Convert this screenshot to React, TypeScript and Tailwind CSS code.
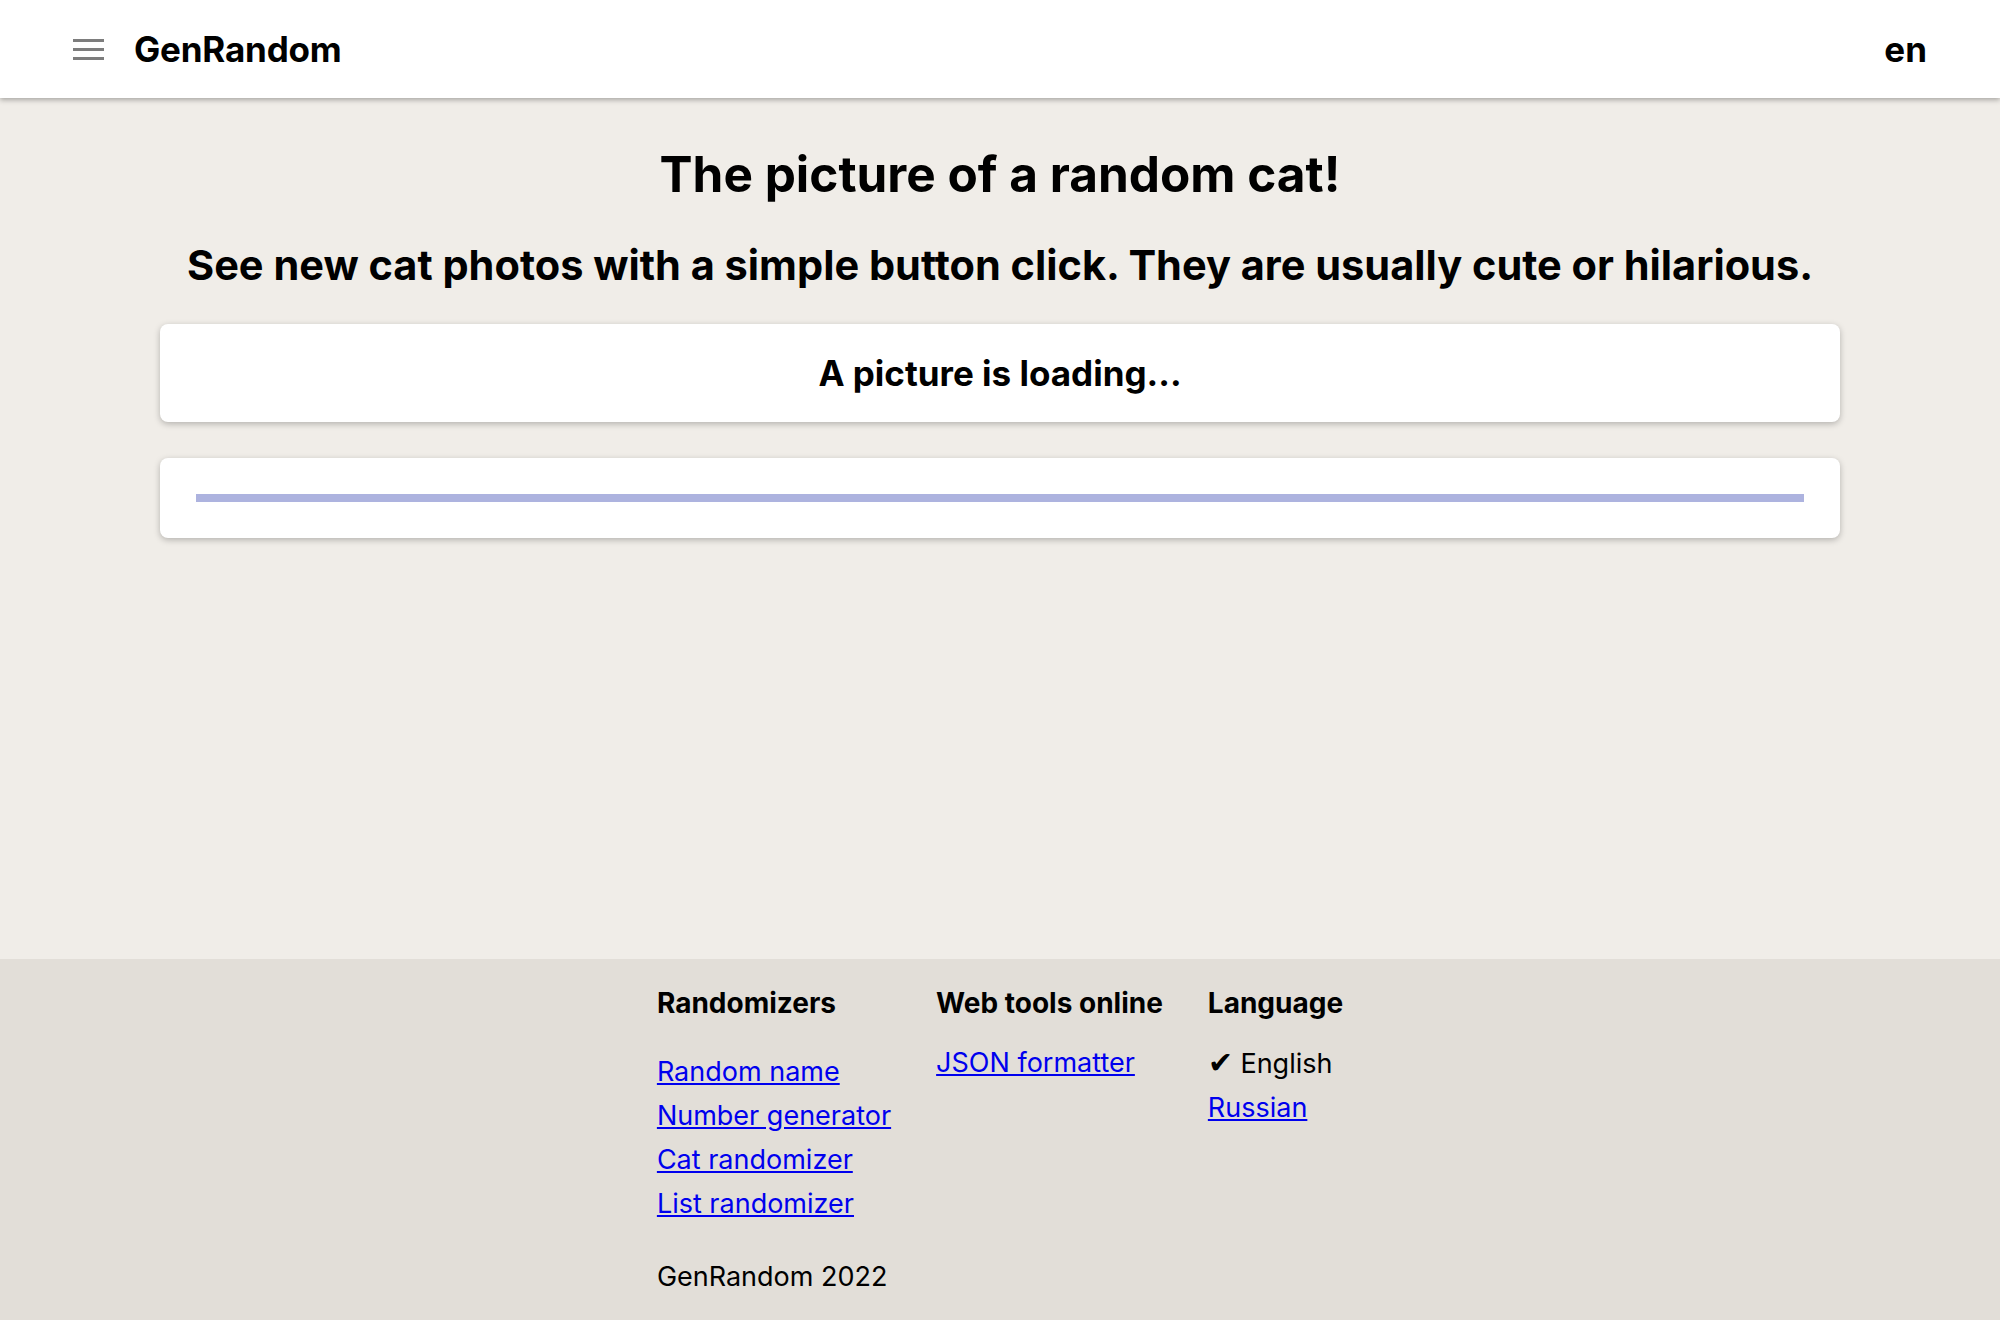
import React from 'react';

const randomizers = ['Random name', 'Number generator', 'Cat randomizer', 'List randomizer'];

const Header: React.FC = () => {
  return (
    <header className="relative z-10 flex h-[98px] items-center justify-between bg-white pl-[73px] pr-[73px] shadow-[0_2px_5px_rgba(0,0,0,0.3)]">
      <div className="flex items-center">
        <button className="flex w-[31px] flex-col gap-[6px]" aria-label="menu">
          <span className="block h-[3px] w-full bg-[#7d7d7d]"></span>
          <span className="block h-[3px] w-full bg-[#7d7d7d]"></span>
          <span className="block h-[3px] w-full bg-[#7d7d7d]"></span>
        </button>
        <a href="#" className="ml-[30px] text-[35px] font-bold leading-none tracking-[-0.2px] text-black">
          GenRandom
        </a>
      </div>
      <span className="text-[35px] font-bold leading-none text-black">en</span>
    </header>
  );
};

const Footer: React.FC = () => {
  return (
    <footer className="bg-[#e2ded8] pt-[28px] pb-[40px]">
      <div className="flex justify-center gap-[45px]">
        <div className="flex flex-col">
          <h3 className="text-[28px] font-bold leading-[32px]">Randomizers</h3>
          <ul className="mt-[31px] flex flex-col">
            {randomizers.map((r) => (
              <li key={r} className="text-[27px] leading-[44px]">
                <a href="#" className="text-[#0000ee] underline">
                  {r}
                </a>
              </li>
            ))}
          </ul>
          <p className="mt-[29px] text-[27px] leading-[44px]">GenRandom 2022</p>
        </div>
        <div className="flex flex-col">
          <h3 className="text-[28px] font-bold leading-[32px]">Web tools online</h3>
          <ul className="mt-[22px]">
            <li className="text-[27px] leading-[44px]">
              <a href="#" className="text-[#0000ee] underline">
                JSON formatter
              </a>
            </li>
          </ul>
        </div>
        <div className="flex flex-col">
          <h3 className="text-[28px] font-bold leading-[32px]">Language</h3>
          <ul className="mt-[21px]">
            <li className="text-[27px] leading-[44px]">
              <span className="text-[30px]">✔</span> English
            </li>
            <li className="text-[27px] leading-[44px]">
              <a href="#" className="text-[#0000ee] underline">
                Russian
              </a>
            </li>
          </ul>
        </div>
      </div>
    </footer>
  );
};

export default function App() {
  return (
    <div className="flex min-h-screen flex-col font-['Inter',sans-serif] text-black">
      <Header />
      <main className="flex min-h-[861px] flex-col items-center bg-[#f0ede8] px-[160px] pt-[46px]">
        <h1 className="text-[49.5px] font-bold leading-[60px]">The picture of a random cat!</h1>
        <h2 className="mt-[36px] text-[41.5px] font-bold leading-[50px]">
          See new cat photos with a simple button click. They are usually cute or hilarious.
        </h2>
        <div className="mt-[34px] flex h-[98px] w-full items-center justify-center rounded-[8px] bg-white shadow-[0_2px_6px_rgba(0,0,0,0.25)]">
          <span className="text-[35px] font-bold">A picture is loading...</span>
        </div>
        <div className="mt-[36px] flex h-[80px] w-full items-center rounded-[8px] bg-white px-[36px] shadow-[0_2px_6px_rgba(0,0,0,0.25)]">
          <div className="h-[8px] w-full bg-[#adb3df]"></div>
        </div>
      </main>
      <Footer />
    </div>
  );
}
